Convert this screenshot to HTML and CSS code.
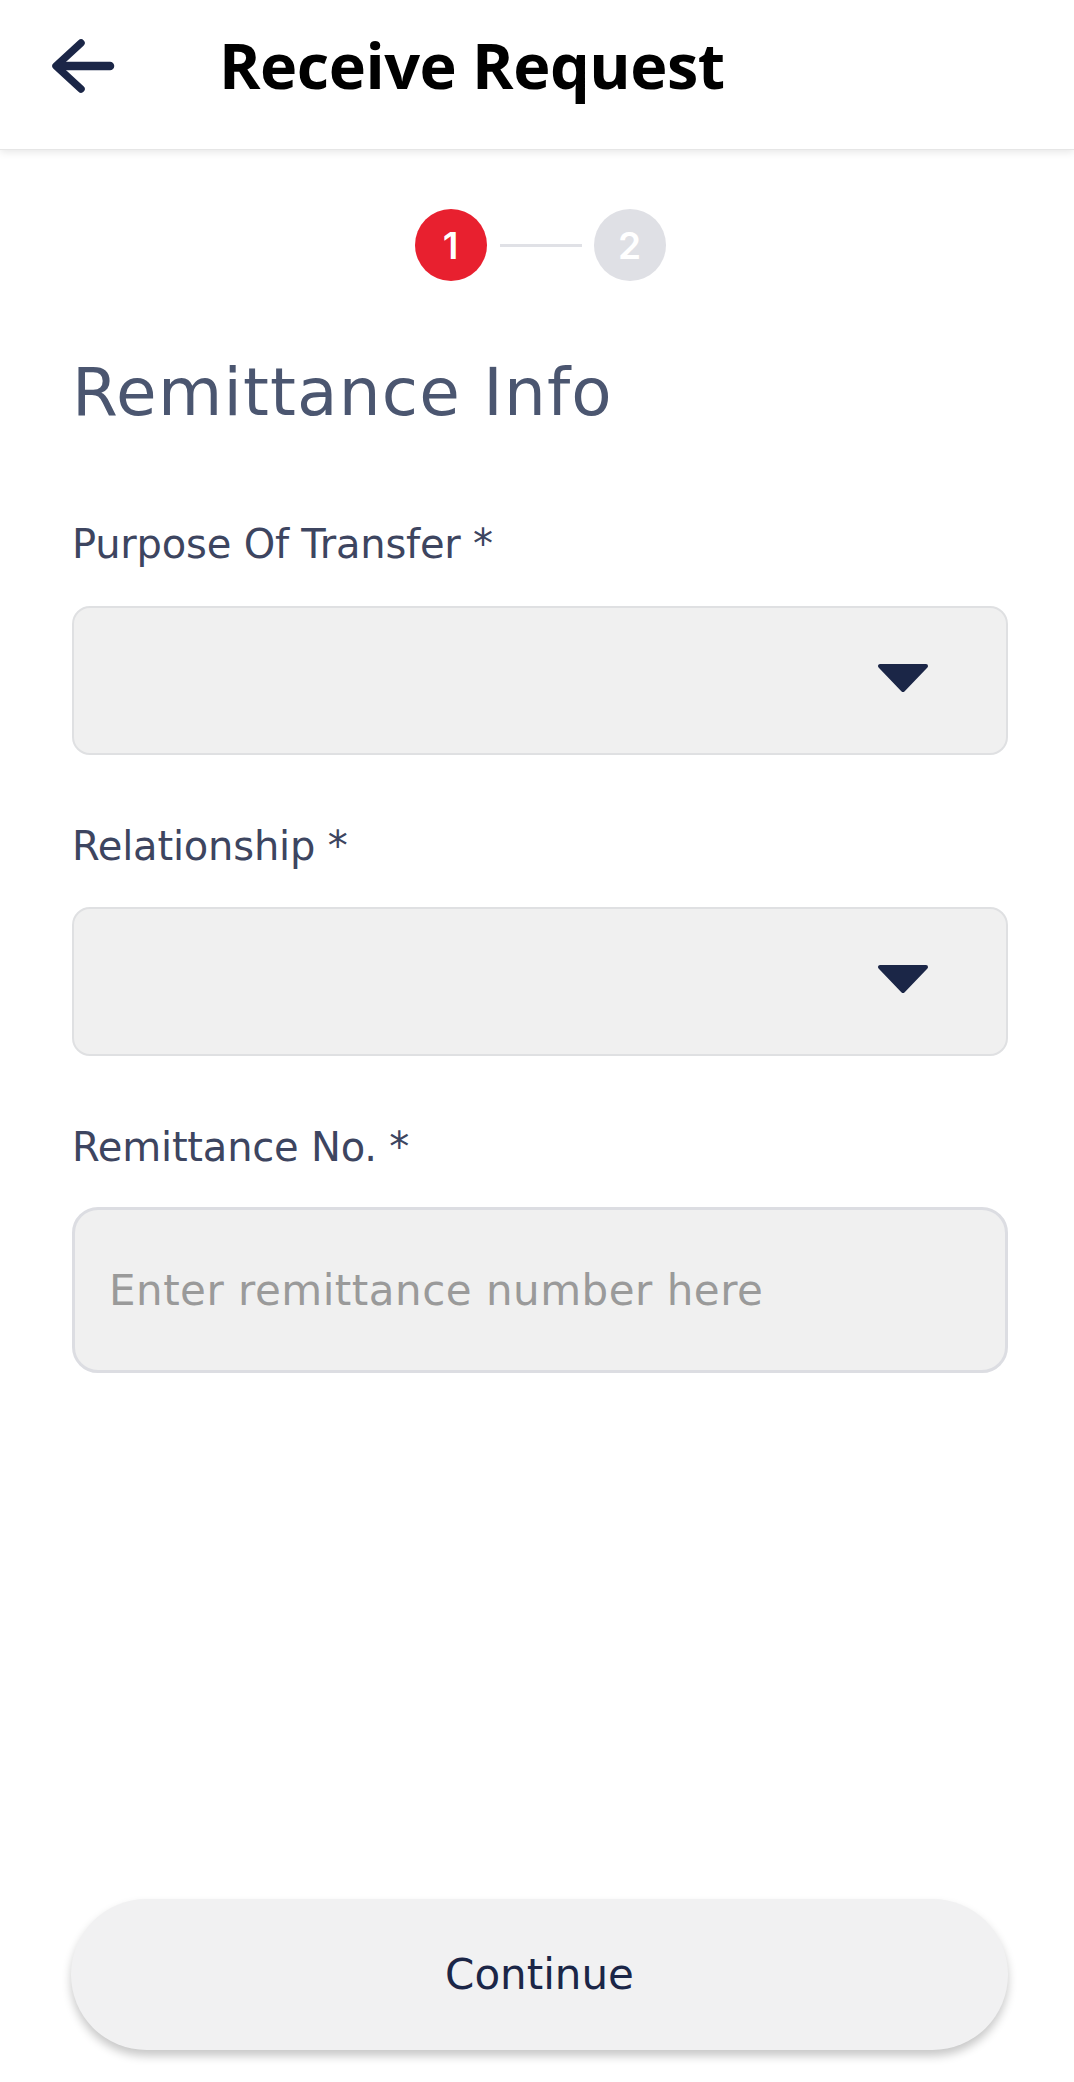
FILE: index.html
```html
<!DOCTYPE html>
<html lang="en">
<head>
<meta charset="utf-8">
<title>Receive Request</title>
<link rel="stylesheet" href="styles.css">
</head>
<body>
<header class="topbar">
  <button class="back" aria-label="Back">
    <svg width="66" height="56" viewBox="0 0 66 56">
      <path d="M32 5 L7 28 L32 51" fill="none" stroke="#1b2647" stroke-width="7.5" stroke-linecap="round" stroke-linejoin="round"/>
      <path d="M9 28 H61" fill="none" stroke="#1b2647" stroke-width="8.5" stroke-linecap="round"/>
    </svg>
  </button>
  <h1 class="title">Receive Request</h1>
</header>

<main class="content">
  <div class="stepper">
    <span class="step active">1</span>
    <span class="step-line"></span>
    <span class="step">2</span>
  </div>

  <h2 class="heading">Remittance Info</h2>

  <div class="field">
    <label class="label">Purpose Of Transfer *</label>
    <div class="select">
      <svg class="caret" width="52" height="30" viewBox="0 0 52 30">
        <path d="M3 3 H49 L26 27 Z" fill="#1b2647" stroke="#1b2647" stroke-width="4" stroke-linejoin="round"/>
      </svg>
    </div>
  </div>

  <div class="field">
    <label class="label">Relationship *</label>
    <div class="select">
      <svg class="caret" width="52" height="30" viewBox="0 0 52 30">
        <path d="M3 3 H49 L26 27 Z" fill="#1b2647" stroke="#1b2647" stroke-width="4" stroke-linejoin="round"/>
      </svg>
    </div>
  </div>

  <div class="field">
    <label class="label">Remittance No. *</label>
    <div class="input"><span class="placeholder">Enter remittance number here</span></div>
  </div>

  <div class="spacer"></div>

  <button class="continue">Continue</button>
</main>
</body>
</html>
```
FILE: styles.css
```css
* { box-sizing: border-box; }
html, body { margin: 0; padding: 0; background: #ffffff; }
body {
  width: 1074px;
  height: 2082px;
  overflow: hidden;
  font-family: "DejaVu Sans", "Inter", sans-serif;
  display: flex;
  flex-direction: column;
}

.topbar {
  height: 150px;
  flex: none;
  display: flex;
  align-items: flex-start;
  background: #ffffff;
  box-shadow: 0 2px 8px rgba(0,0,0,0.10);
  border-bottom: 1px solid #e6e6e6;
  position: relative;
  z-index: 1;
}
.back {
  border: 0;
  background: none;
  padding: 0;
  margin: 38px 0 0 49px;
  width: 66px;
  height: 56px;
  display: flex;
}
.title {
  margin: 33px 0 0 104px;
  font-family: "Open Sans", sans-serif;
  font-weight: 700;
  font-size: 63px;
  line-height: 1;
  color: #000000;
  letter-spacing: -0.5px;
}

.content {
  flex: 1;
  display: flex;
  flex-direction: column;
  padding: 0 66px 32px 72px;
}

.stepper {
  display: flex;
  align-items: center;
  justify-content: center;
  margin-top: 59px;
}
.step {
  width: 72px;
  height: 72px;
  border-radius: 50%;
  background: #dfe0e5;
  color: #ffffff;
  display: flex;
  align-items: center;
  justify-content: center;
  font-family: "Inter", sans-serif;
  font-size: 37px;
  font-weight: 600;
}
.step.active { background: #e8202f; }
.step-line {
  width: 82px;
  height: 3px;
  background: #e0e1e6;
  margin: 0 12px 0 13px;
}

.heading {
  margin: 72px 0 0 0;
  font-size: 66px;
  font-weight: 400;
  line-height: 80px;
  color: #4b5670;
  letter-spacing: 1.2px;
}

.field { display: flex; flex-direction: column; }
.label {
  display: block;
  margin-top: 86px;
  font-size: 40px;
  font-weight: 400;
  line-height: 50px;
  color: #3d4560;
  letter-spacing: -0.2px;
}
.field + .field .label { margin-top: 66px; }

.select {
  margin-top: 37px;
  height: 149px;
  background: #f0f0f0;
  border: 2px solid #dfe0e2;
  border-radius: 18px;
  display: flex;
  align-items: center;
  justify-content: flex-end;
  padding-right: 77px;
}
.field + .field .select { margin-top: 36px; }
.caret { display: block; margin-top: -6px; }

.input {
  margin-top: 35px;
  height: 166px;
  background: #f0f0f0;
  border: 3px solid #dcdde2;
  border-radius: 26px;
  display: flex;
  align-items: center;
  padding-left: 34px;
}
.placeholder {
  font-size: 42px;
  color: #9a9a9a;
  letter-spacing: 0.5px;
}

.spacer { flex: 1; }

.continue {
  height: 151px;
  width: 937px;
  margin-left: -1px;
  border: 0;
  border-radius: 76px;
  background: #f1f1f2;
  box-shadow: 0 6px 10px rgba(0,0,0,0.22);
  font-family: "DejaVu Sans", sans-serif;
  font-size: 42px;
  color: #1b2647;
  cursor: pointer;
}
```
